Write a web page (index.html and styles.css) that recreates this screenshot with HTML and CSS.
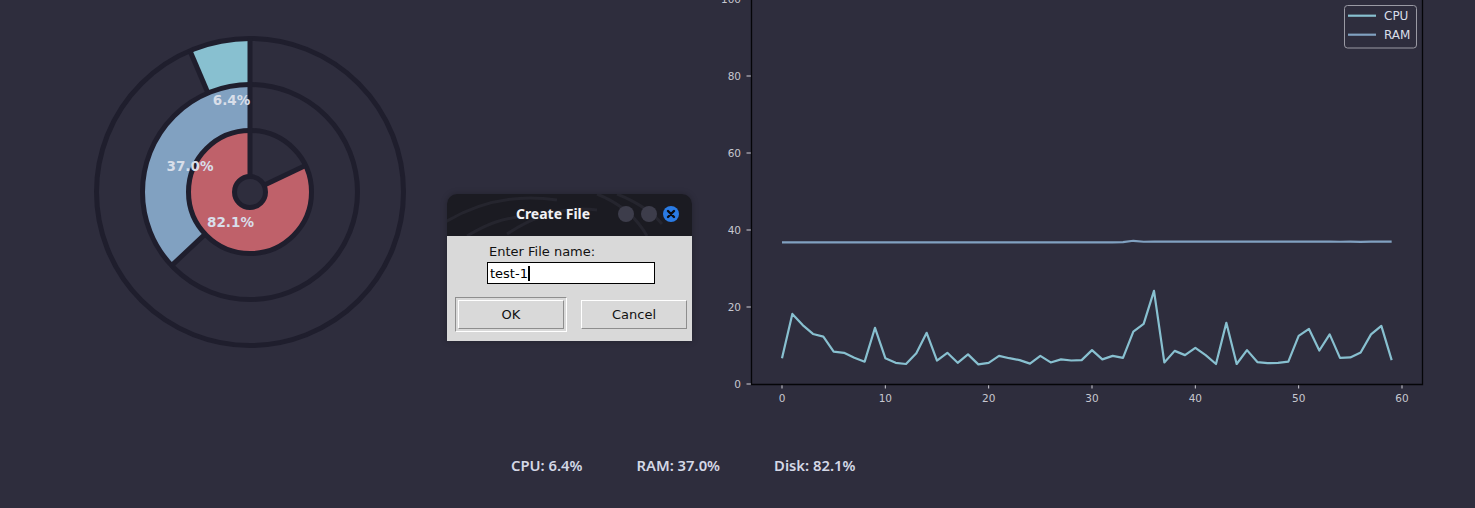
FILE: index.html
```html
<!DOCTYPE html>
<html lang="en">
<head>
<meta charset="utf-8">
<title>System Monitor</title>
<link rel="stylesheet" href="styles.css">
</head>
<body>
<div class="app">
  <div class="plots">
    <svg class="donut" width="500" height="440" viewBox="0 0 500 440">
      <path class="w-cpu" d="M250,38.5 A153.5,153.5 0 0 0 189.93,50.75 L207.93,93.08 A107.5,107.5 0 0 1 250,84.5 Z"/>
      <path class="w-ram" d="M250,84.5 A107.5,107.5 0 0 0 171.63,265.58 L205.17,234.10 A61.5,61.5 0 0 1 250,130.5 Z"/>
      <path class="w-disk" d="M250,130.5 A61.5,61.5 0 1 0 305.48,165.46 L263.98,185.31 A15.5,15.5 0 1 1 250,176.5 Z"/>
      <g class="edges">
        <circle cx="250" cy="192" r="153.5"/>
        <circle cx="250" cy="192" r="107.5"/>
        <circle cx="250" cy="192" r="61.5"/>
        <circle cx="250" cy="192" r="15.5"/>
        <line x1="250" y1="38.5" x2="250" y2="176.5"/>
        <line x1="189.93" y1="50.75" x2="207.93" y2="93.08"/>
        <line x1="171.63" y1="265.58" x2="205.17" y2="234.10"/>
        <line x1="305.48" y1="165.46" x2="263.98" y2="185.31"/>
      </g>
      <text class="pct" x="231.5" y="100">6.4%</text>
      <text class="pct" x="190" y="165.5">37.0%</text>
      <text class="pct" x="230.5" y="222">82.1%</text>
    </svg>

    <svg class="chart" width="775" height="440" viewBox="0 0 775 440">
      <g class="ticks">
        <line x1="46.5" y1="384" x2="51" y2="384"/>
        <line x1="46.5" y1="307" x2="51" y2="307"/>
        <line x1="46.5" y1="230" x2="51" y2="230"/>
        <line x1="46.5" y1="153" x2="51" y2="153"/>
        <line x1="46.5" y1="76" x2="51" y2="76"/>
        <line x1="46.5" y1="-1" x2="51" y2="-1"/>
        <line x1="82" y1="384" x2="82" y2="388.5"/>
        <line x1="185.33" y1="384" x2="185.33" y2="388.5"/>
        <line x1="288.67" y1="384" x2="288.67" y2="388.5"/>
        <line x1="392" y1="384" x2="392" y2="388.5"/>
        <line x1="495.33" y1="384" x2="495.33" y2="388.5"/>
        <line x1="598.67" y1="384" x2="598.67" y2="388.5"/>
        <line x1="702" y1="384" x2="702" y2="388.5"/>
      </g>
      <g class="ylabels">
        <text x="41" y="384">0</text>
        <text x="41" y="307">20</text>
        <text x="41" y="230">40</text>
        <text x="41" y="153">60</text>
        <text x="41" y="76">80</text>
        <text x="41" y="-1">100</text>
      </g>
      <g class="xlabels">
        <text x="82" y="398">0</text>
        <text x="185.33" y="398">10</text>
        <text x="288.67" y="398">20</text>
        <text x="392" y="398">30</text>
        <text x="495.33" y="398">40</text>
        <text x="598.67" y="398">50</text>
        <text x="702" y="398">60</text>
      </g>
      <g transform="translate(82,384) scale(10.3333,-3.85)">
        <polyline class="line-ram" vector-effect="non-scaling-stroke" points="0,36.8 1,36.8 2,36.8 3,36.8 4,36.8 5,36.8 6,36.8 7,36.8 8,36.8 9,36.8 10,36.8 11,36.8 12,36.8 13,36.8 14,36.8 15,36.8 16,36.8 17,36.8 18,36.8 19,36.8 20,36.8 21,36.8 22,36.8 23,36.8 24,36.8 25,36.8 26,36.8 27,36.8 28,36.8 29,36.8 30,36.8 31,36.8 32,36.8 33,36.85 34,37.2 35,36.95 36,37.0 37,37.0 38,37.0 39,37.0 40,37.0 41,37.0 42,37.0 43,37.0 44,37.0 45,37.0 46,37.0 47,37.0 48,37.0 49,37.0 50,37.0 51,37.0 52,37.0 53,37.0 54,36.95 55,37.0 56,36.9 57,37.0 58,37.0 59,37.0"/>
        <polyline class="line-cpu" vector-effect="non-scaling-stroke" points="0,6.7 1,18.2 2,15.3 3,13.0 4,12.3 5,8.4 6,8.1 7,6.8 8,5.8 9,14.6 10,6.7 11,5.5 12,5.2 13,8.0 14,13.3 15,6.1 16,8.1 17,5.5 18,7.7 19,5.1 20,5.5 21,7.3 22,6.7 23,6.2 24,5.3 25,7.3 26,5.6 27,6.4 28,6.1 29,6.2 30,8.8 31,6.4 32,7.3 33,6.8 34,13.6 35,15.6 36,24.2 37,5.6 38,8.6 39,7.5 40,9.4 41,7.5 42,5.2 43,15.9 44,5.2 45,8.8 46,5.7 47,5.4 48,5.5 49,5.8 50,12.5 51,14.3 52,8.7 53,12.9 54,6.8 55,6.9 56,8.2 57,12.9 58,15.1 59,6.2"/>
      </g>
      <path class="spines" d="M51.5,-2 V384.5 H722.5 V-2"/>
      <rect class="legend-box" x="644.5" y="5.5" width="72" height="42.5" rx="3"/>
      <line class="line-cpu" x1="648" y1="15.7" x2="676" y2="15.7"/>
      <line class="line-ram" x1="648" y1="34.7" x2="676" y2="34.7"/>
      <text class="legend-text" x="684" y="15.7">CPU</text>
      <text class="legend-text" x="684" y="34.7">RAM</text>
    </svg>
  </div>

  <div class="stats">
    <span class="stat">CPU: 6.4%</span>
    <span class="stat">RAM: 37.0%</span>
    <span class="stat">Disk: 82.1%</span>
  </div>

  <div class="dialog">
    <div class="titlebar">
      <svg class="dragon" width="245" height="42" viewBox="0 0 245 42">
        <path d="M-5,30 C30,8 70,0 110,6"/>
        <path d="M60,40 C90,20 120,12 150,16"/>
        <path d="M150,0 C175,10 190,24 200,42"/>
        <path d="M170,0 C190,8 205,18 215,30"/>
        <path d="M20,42 C40,30 55,24 80,22"/>
      </svg>
      <span class="title">Create File</span>
      <div class="wm-buttons">
        <span class="wm-btn"></span>
        <span class="wm-btn"></span>
        <span class="wm-btn close">
          <svg width="16" height="16" viewBox="0 0 16 16"><path d="M5,5 L11,11 M11,5 L5,11"/></svg>
        </span>
      </div>
    </div>
    <div class="dlg-body">
      <div class="prompt">Enter File name:</div>
      <div class="entry"><span class="entry-text">test-1</span><span class="caret"></span></div>
      <div class="buttons">
        <div class="btn-ring"><button class="btn">OK</button></div>
        <button class="btn btn-cancel">Cancel</button>
      </div>
    </div>
  </div>
</div>
</body>
</html>
```
FILE: styles.css
```css
html, body {
  margin: 0;
  padding: 0;
}
body {
  background: #2e2d3d;
  width: 1475px;
  height: 508px;
  overflow: hidden;
  font-family: "DejaVu Sans", sans-serif;
}
.app {
  position: relative;
  display: flex;
  flex-direction: column;
  width: 1475px;
  height: 508px;
}
.plots {
  display: flex;
  justify-content: space-between;
  height: 440px;
}
.donut, .chart {
  display: block;
}

/* donut */
.w-cpu { fill: #88c0d0; }
.w-ram { fill: #81a1c1; }
.w-disk { fill: #bf616a; }
.edges circle, .edges line {
  fill: none;
  stroke: #1f1e2d;
  stroke-width: 5;
}
.pct {
  font-family: "DejaVu Sans", sans-serif;
  font-weight: bold;
  font-size: 13.5px;
  fill: #d8dee9;
  text-anchor: middle;
  dominant-baseline: central;
}

/* line chart */
.ticks line {
  stroke: #d0d0d8;
  stroke-width: 1;
}
.ylabels text, .xlabels text {
  font-family: "DejaVu Sans", sans-serif;
  font-size: 10.5px;
  fill: #c6c7d0;
  dominant-baseline: central;
}
.ylabels text { text-anchor: end; }
.xlabels text { text-anchor: middle; }
.line-cpu {
  fill: none;
  stroke: #88c0d0;
  stroke-width: 2.2;
  stroke-linejoin: round;
}
.line-ram {
  fill: none;
  stroke: #81a1c1;
  stroke-width: 2.2;
  stroke-linejoin: round;
}
.spines {
  fill: none;
  stroke: #050508;
  stroke-width: 1.3;
}
.legend-box {
  fill: #2e2d3d;
  fill-opacity: 0.8;
  stroke: #9a9aa4;
  stroke-width: 1;
}
.legend-text {
  font-family: "DejaVu Sans", sans-serif;
  font-size: 12px;
  fill: #d8dee9;
  dominant-baseline: central;
}

/* bottom stats */
.stats {
  display: flex;
  align-items: center;
  gap: 54px;
  padding-left: 511px;
  height: 50px;
}
.stat {
  font-family: "Noto Sans", sans-serif;
  font-weight: 600;
  font-size: 14.8px;
  color: #d4d8e6;
  white-space: nowrap;
}

/* dialog window */
.dialog {
  position: absolute;
  left: 447px;
  top: 194px;
  width: 245px;
  height: 147px;
  display: flex;
  flex-direction: column;
  border-radius: 10px 10px 0 0;
  overflow: hidden;
  box-shadow: 0 0 6px rgba(0, 0, 0, 0.25);
}
.titlebar {
  position: relative;
  height: 42px;
  flex: none;
  display: flex;
  align-items: center;
  padding-bottom: 3px;
  box-sizing: border-box;
  background: #1b1b22;
}
.dragon {
  position: absolute;
  left: 0;
  top: 0;
}
.dragon path {
  fill: none;
  stroke: #25252e;
  stroke-width: 3;
}
.title {
  position: relative;
  flex: 1;
  padding-left: 41px;
  text-align: center;
  font-family: "Noto Sans", sans-serif;
  font-weight: bold;
  font-size: 14px;
  color: #f2f2f5;
}
.wm-buttons {
  position: relative;
  display: flex;
  gap: 6.5px;
  padding-right: 13px;
}
.wm-btn {
  width: 16px;
  height: 16px;
  border-radius: 50%;
  background: #3d3d4b;
  display: block;
}
.wm-btn.close {
  background: #2a7be4;
}
.wm-btn svg {
  display: block;
}
.wm-btn svg path {
  stroke: #0b0b10;
  stroke-width: 2.4;
  stroke-linecap: round;
  fill: none;
}
.dlg-body {
  flex: 1;
  background: #d9d9d9;
  display: flex;
  flex-direction: column;
  padding-top: 8px;
}
.prompt {
  margin-left: 42px;
  font-family: "DejaVu Sans", sans-serif;
  font-size: 13px;
  line-height: 16px;
  color: #111;
}
.entry {
  margin-top: 2px;
  margin-left: 40px;
  width: 164px;
  height: 20px;
  border: 1px solid #000;
  background: #fff;
  display: flex;
  align-items: center;
  padding-left: 2px;
}
.entry-text {
  font-family: "DejaVu Sans", sans-serif;
  font-size: 13px;
  color: #000;
}
.caret {
  width: 2px;
  height: 15px;
  background: #000;
  margin-left: 0;
}
.buttons {
  display: flex;
  align-items: center;
  gap: 14px;
  margin-top: 13px;
  margin-left: 8px;
}
.btn-ring {
  width: 110px;
  height: 33px;
  border: 1px solid;
  border-color: #8e8e8e #ffffff #ffffff #8e8e8e;
  display: flex;
  align-items: center;
  justify-content: center;
}
.btn {
  font-family: "DejaVu Sans", sans-serif;
  font-size: 13px;
  color: #111;
  background: #d9d9d9;
  border: 1px solid;
  border-color: #ffffff #8e8e8e #8e8e8e #ffffff;
  padding: 0;
  margin: 0;
  width: 106px;
  height: 29px;
  border-radius: 0;
  outline: none;
}
.btn-cancel {
  width: 106px;
  height: 29px;
}
```
